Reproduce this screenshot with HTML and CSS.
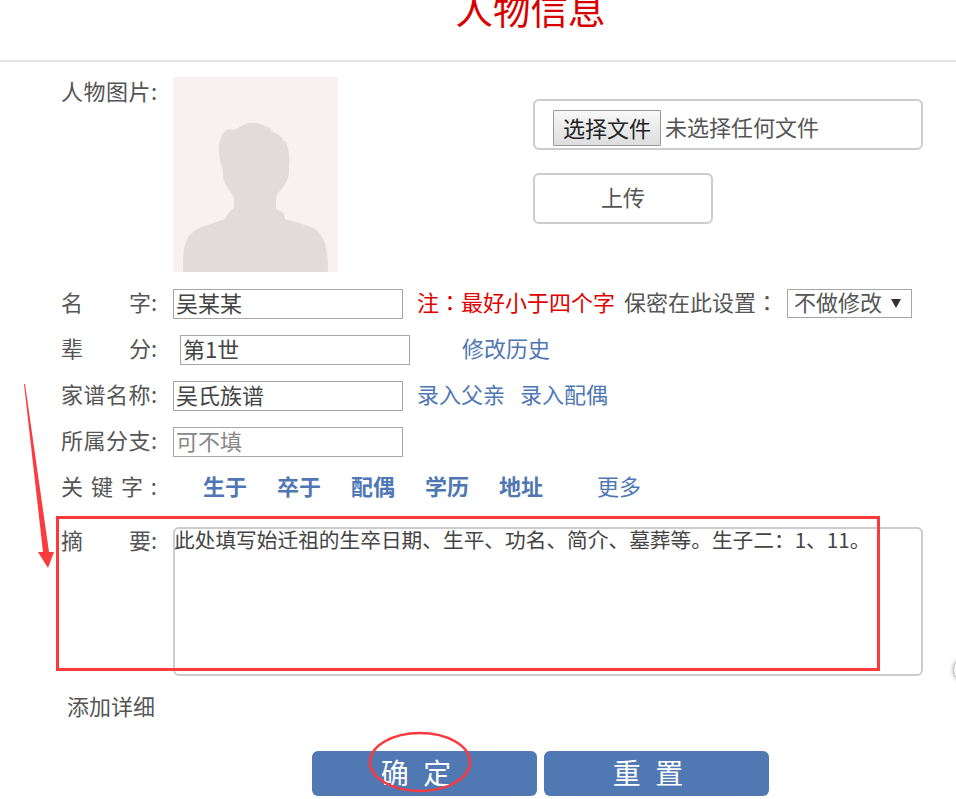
FILE: index.html
```html
<!DOCTYPE html>
<html lang="zh-CN">
<head>
<meta charset="utf-8">
<title>人物信息</title>
<link rel="stylesheet" href="styles.css">
</head>
<body>
<header class="head"><h1 class="title">人物信息</h1></header>
<main class="form">
  <section class="photo-row">
    <div class="label"><span>人</span><span>物</span><span>图</span><span>片</span><span>:</span></div>
    <svg class="photo" viewBox="0 0 165 195" aria-hidden="true">
      <rect class="photo-bg" width="165" height="195"/>
      <path class="photo-fg" d="M10 195C10 182 10 172 13 165C16 157 22 152 32 149C40 146 46 144 52 142C54 137 57 134 61 131L61 121C59 116 56 113 54 110C51 105 50 102 50 98C50 94 50 92 49 90C47 84 46 79 46 73C46 66 47 62 50 57C51 55 53 53 56 52L60 53C62 52 64 52 65 51C69 48 73 46 79 46C85 46 88 47 92 49L100 53L96 53C104 56 109 60 112 65L115 65L113 66C116 72 117 80 116 90C116 95 116 98 115 101C113 107 109 112 105 116C104 118 103 120 103 123L103 132C106 133 109 134 111 137L112 142C122 145 130 147 138 150C145 153 149 159 152 166C154 174 155 184 155 195Z"/>
    </svg>
    <div class="upload">
      <div class="file-box"><button class="file-btn" type="button">选择文件</button><span class="file-name">未选择任何文件</span></div>
      <button class="upload-btn" type="button">上传</button>
    </div>
  </section>

  <div class="row row-first">
    <div class="label"><span>名</span><span>字:</span></div>
    <input class="field" type="text" value="吴某某">
    <span class="note">注<span class="fw" lang="zh-TW">&#xFF1A;</span>最好小于四个字</span>
    <span class="secret">保密在此设置<span class="fw" lang="zh-TW">&#xFF1A;</span></span>
    <div class="select"><span>不做修改</span><span class="caret"></span></div>
  </div>
  <div class="row">
    <div class="label"><span>辈</span><span>分:</span></div>
    <input class="field field-shift" type="text" value="第1世">
    <a class="link link-history" href="#">修改历史</a>
  </div>
  <div class="row">
    <div class="label"><span>家</span><span>谱</span><span>名</span><span>称</span><span>:</span></div>
    <input class="field" type="text" value="吴氏族谱">
    <a class="link link-first" href="#">录入父亲</a>
    <a class="link" href="#">录入配偶</a>
  </div>
  <div class="row">
    <div class="label"><span>所</span><span>属</span><span>分</span><span>支</span><span>:</span></div>
    <input class="field" type="text" placeholder="可不填">
  </div>
  <div class="row">
    <div class="label"><span>关</span><span>键</span><span>字</span><span>:</span></div>
    <div class="keys">
      <a class="key" href="#">生于</a>
      <a class="key" href="#">卒于</a>
      <a class="key" href="#">配偶</a>
      <a class="key" href="#">学历</a>
      <a class="key" href="#">地址</a>
      <a class="link link-more" href="#">更多</a>
    </div>
  </div>
  <div class="row-area">
    <div class="label"><span>摘</span><span>要:</span></div>
    <textarea class="summary">此处填写始迁祖的生卒日期、生平、功名、简介、墓葬等。生子二&#xFF1A;1、11。</textarea>
  </div>
  <div class="detail">添加详细</div>
  <div class="actions">
    <button class="action" type="button">确 定</button>
    <button class="action" type="button">重 置</button>
  </div>
</main>
<svg class="marks" viewBox="0 0 956 799" aria-hidden="true">
  <rect class="mark-line" x="57.5" y="517.5" width="821" height="152"/>
  <ellipse class="mark-thin" cx="420" cy="762" rx="50" ry="29"/>
  <path class="mark-fill" d="M24 384L25 384L49 552L54 552L48 568L38 552L43 552Z"/>
</svg>
<div class="edge-dot"></div>
</body>
</html>
```
FILE: styles.css
```css
* { box-sizing: border-box; }
html, body { margin: 0; height: 799px; overflow: hidden; background: #fff; }
body {
  position: relative;
  font-family: "Noto Sans CJK SC", "Liberation Sans", sans-serif;
  font-size: 22px;
  color: #555;
}
.head {
  height: 62px;
  border-bottom: 2px solid #e3e3e3;
  overflow: hidden;
  padding-left: 105px;
  text-align: center;
}
.title {
  margin: -17px 0 0;
  font-size: 37.5px;
  font-weight: 400;
  line-height: 50px;
  color: #d90000;
}
.fw { font-family: "Noto Sans CJK TC", sans-serif; }
.form { padding: 15px 0 0 61px; }
.label {
  flex: none;
  width: 96px;
  display: flex;
  justify-content: space-between;
  line-height: 30px;
  margin-bottom: 6px;
}
.photo-row { display: flex; height: 195px; }
.photo-row .label { margin-top: -2px; }
.photo { flex: none; width: 165px; height: 195px; margin-left: 16px; display: block; }
.photo-bg { fill: #f8f0f1; }
.photo-fg { fill: #e3dbdb; }
.upload { margin: 22px 0 0 195px; display: flex; flex-direction: column; gap: 23px; align-items: flex-start; }
.file-box {
  width: 390px;
  height: 51px;
  border: 2px solid #ccc;
  border-radius: 6px;
  padding: 9px 0 0 18px;
  display: flex;
  align-items: flex-start;
  gap: 4px;
  line-height: 33px;
}
.file-btn {
  width: 108px;
  height: 36px;
  padding: 0 0 5px;
  border: 1px solid #999;
  border-radius: 1px;
  background: linear-gradient(#f8f8f8, #ddd);
  font: inherit;
  color: #222;
}
.upload-btn {
  width: 180px;
  height: 51px;
  padding: 0 0 5px;
  border: 2px solid #ccc;
  border-radius: 6px;
  background: #fff;
  font: inherit;
  color: #555;
}
.row { display: flex; align-items: center; height: 30px; margin-top: 16px; white-space: nowrap; }
.row-first { margin-top: 17px; }
.field {
  flex: none;
  width: 230px;
  height: 30px;
  margin-left: 16px;
  padding: 0 2px 5px;
  border: 1px solid #a6a6a6;
  border-radius: 0;
  font: inherit;
  color: #444;
  outline: none;
}
.field::placeholder { color: #888; }
.field-shift { margin-left: 23px; }
.note, .secret, .link, .keys { margin-bottom: 6px; }
.note { margin-left: 14px; color: #e00000; }
.secret { margin-left: 9px; }
.select {
  flex: none;
  display: flex;
  justify-content: space-between;
  align-items: center;
  width: 125px;
  height: 29px;
  margin: -2px 0 0 9px;
  padding: 0 10px 4px 6px;
  border: 1px solid #a6a6a6;
  line-height: 24px;
}
.caret {
  margin-top: 4px;
  border-left: 5px solid transparent;
  border-right: 5px solid transparent;
  border-top: 9px solid #333;
}
.link { color: #4f77b3; text-decoration: none; }
.link-history { margin-left: 52px; }
.link-first { margin-left: 14px; margin-right: 15px; }
.keys { display: flex; margin-left: 46px; gap: 30px; align-items: center; }
.key { color: #4f77b3; font-weight: 700; text-decoration: none; }
.keys .link { margin-bottom: 0; }
.link-more { margin-left: 24px; }
.row-area { display: flex; margin-top: 24px; height: 149px; }
.row-area .label { margin-top: -3px; }
.summary {
  flex: none;
  width: 750px;
  height: 149px;
  margin-left: 16px;
  padding: 0;
  border: 2px solid #ccc;
  border-radius: 6px;
  font: inherit;
  font-size: 20.7px;
  line-height: 20px;
  text-indent: -1px;
  color: #444;
  resize: none;
  outline: none;
}
.detail { margin: 14px 0 0 6px; line-height: 30px; }
.actions { display: flex; gap: 7px; margin: 31px 0 0 251px; }
.action {
  width: 225px;
  height: 45px;
  padding: 0 13px 3px 0;
  border: 0;
  border-radius: 6px;
  background: #5078b3;
  color: #fff;
  font: inherit;
  font-size: 28px;
  line-height: 42px;
  letter-spacing: 4px;
}
.marks { position: absolute; left: 0; top: 0; width: 956px; height: 799px; pointer-events: none; }
.mark-line { fill: none; stroke: #fb3a3d; stroke-width: 3; }
.mark-thin { fill: none; stroke: #fb3a3d; stroke-width: 2.5; }
.mark-fill { fill: #fb3a3d; }
.edge-dot {
  position: absolute;
  left: 953px;
  top: 657px;
  width: 26px;
  height: 26px;
  border-radius: 50%;
  background: #fff;
  border: 1px solid #bbb;
  box-shadow: 0 0 4px rgba(0,0,0,.3);
}
```
